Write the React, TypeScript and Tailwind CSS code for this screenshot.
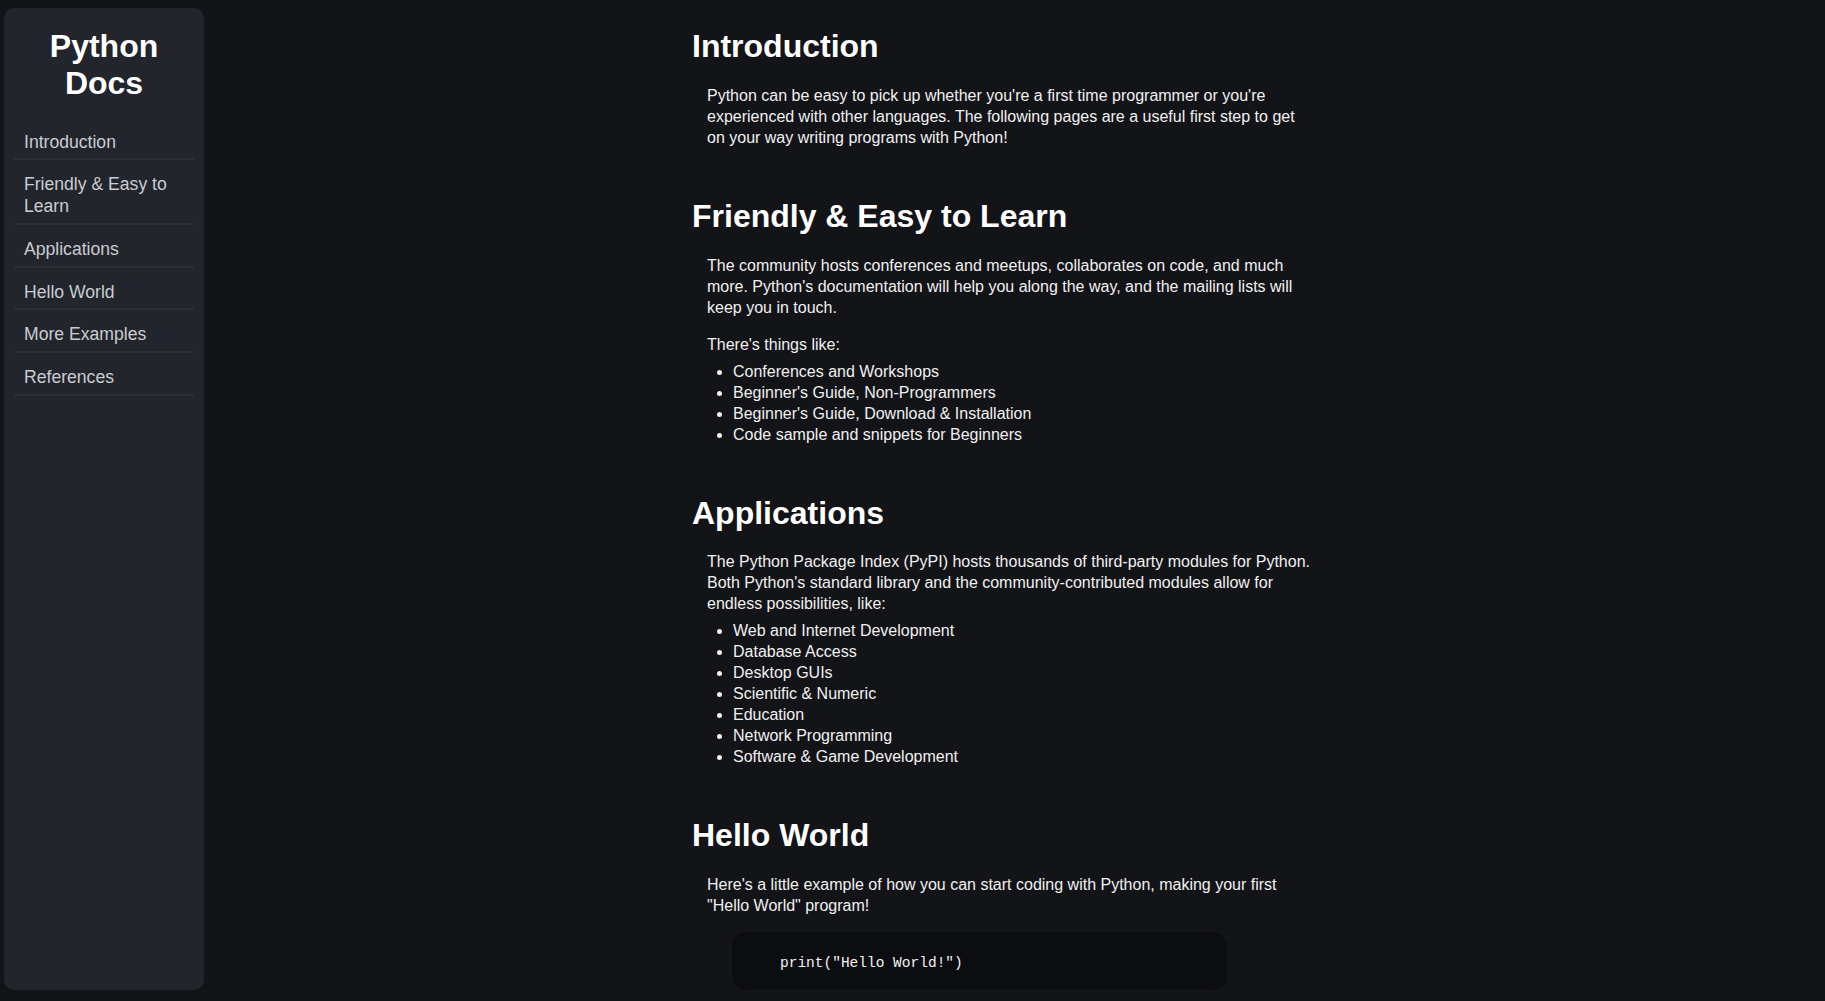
import React from 'react';

const navItems = [
  'Introduction',
  'Friendly & Easy to Learn',
  'Applications',
  'Hello World',
  'More Examples',
  'References',
];

const thingsLike = [
  'Conferences and Workshops',
  "Beginner's Guide, Non-Programmers",
  "Beginner's Guide, Download & Installation",
  'Code sample and snippets for Beginners',
];

const applications = [
  'Web and Internet Development',
  'Database Access',
  'Desktop GUIs',
  'Scientific & Numeric',
  'Education',
  'Network Programming',
  'Software & Game Development',
];

const Section: React.FC<{ title: string; children: React.ReactNode }> = ({ title, children }) => (
  <section id={title.replace(/\W+/g, '_')}>
    <h2 className="text-[32px] font-bold leading-[36.8px] text-white mb-[20px]">{title}</h2>
    <div className="ml-[15px] mr-[25px] text-[16px] leading-[21px] text-[#f0f0f0]">{children}</div>
  </section>
);

const BulletList: React.FC<{ items: string[] }> = ({ items }) => (
  <ul className="list-disc pl-[26px] mt-1.5">
    {items.map((item) => (
      <li key={item}>{item}</li>
    ))}
  </ul>
);

const App: React.FC = () => {
  return (
    <div
      className="flex h-screen overflow-hidden bg-[#131418]"
      style={{ fontFamily: '"Liberation Sans", Arial, sans-serif' }}
    >
      {/* sidebar */}
      <nav className="shrink-0 ml-1 mt-2 w-[200px] h-[982px] rounded-[10px] bg-[#22252c] pt-5">
        <h1 className="text-center text-[32px] font-bold leading-[36.8px] text-white mb-[16px]">
          Python
          <br />
          Docs
        </h1>
        <ul className="mx-[10px]">
          {navItems.map((item) => (
            <li key={item} className="border-b-2 border-[#2c2f36]">
              <a
                href={'#' + item.replace(/\W+/g, '_')}
                className="block pl-[10px] pr-2 pt-[14px] pb-[5.2px] text-[17.6px] leading-[21.6px] text-[#c9ccd1]"
              >
                {item}
              </a>
            </li>
          ))}
        </ul>
      </nav>

      {/* main content */}
      <main className="flex-1">
        <div className="mx-auto w-[645px] pt-[28px] flex flex-col gap-[50px]">
          <Section title="Introduction">
            <p>
              Python can be easy to pick up whether you're a first time programmer or you're experienced with other
              languages. The following pages are a useful first step to get on your way writing programs with Python!
            </p>
          </Section>

          <Section title="Friendly & Easy to Learn">
            <p className="mb-4">
              The community hosts conferences and meetups, collaborates on code, and much more. Python's documentation
              will help you along the way, and the mailing lists will keep you in touch.
            </p>
            <p>There's things like:</p>
            <BulletList items={thingsLike} />
          </Section>

          <Section title="Applications">
            <p>
              The Python Package Index (PyPI) hosts thousands of third-party modules for Python. Both Python's standard
              library and the community-contributed modules allow for endless possibilities, like:
            </p>
            <BulletList items={applications} />
          </Section>

          <Section title="Hello World">
            <p>
              Here's a little example of how you can start coding with Python, making your first "Hello World" program!
            </p>
            <pre className="mt-4 ml-[25px] w-[495px] h-[58px] flex items-center pl-12 pt-1 rounded-[14px] bg-[#0c0d10] text-[14.5px] text-[#f2f2f2] font-['DejaVu_Sans_Mono',monospace]">
              <code>print("Hello World!")</code>
            </pre>
          </Section>

          <Section title="More Examples">
            <p>
              Python can be used for many purposes. Here are a few short examples to try once you have written your
              first program.
            </p>
          </Section>

          <Section title="References">
            <p>All the documentation in this page is taken from python.org.</p>
          </Section>
        </div>
      </main>
    </div>
  );
};

export default App;
